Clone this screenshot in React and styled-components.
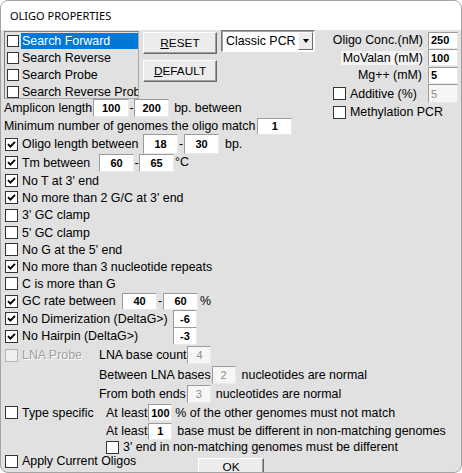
import styled, { createGlobalStyle } from "styled-components";

const GlobalStyle = createGlobalStyle`
  html, body {
    margin: 0;
    padding: 0;
    background: #ffffff;
  }
  body {
    font-family: "Liberation Sans", Arial, sans-serif;
    font-size: 12.4px;
    color: #000;
  }
`;

const Window = styled.div`
  width: 462px;
  height: 473px;
  box-sizing: border-box;
  border: 1px solid #a3a3a3;
  border-radius: 8px;
  overflow: hidden;
  display: flex;
  flex-direction: column;
  background: #e1e1e1;
`;

const TitleBar = styled.div`
  flex: none;
  height: 29px;
  background: #ffffff;
  display: flex;
  align-items: center;
  padding-left: 9px;
  font-family: "Noto Sans", "Liberation Sans", sans-serif;
  font-size: 11px;
  color: #000;
`;

const Body = styled.div`
  display: flex;
  flex-direction: column;
  padding: 0 3px;
`;

const TopSection = styled.div`
  display: flex;
  justify-content: space-between;
  height: 105px;
`;

const LeftCol = styled.div`
  display: flex;
  flex-direction: column;
`;

const TopRow = styled.div`
  display: flex;
  align-items: flex-start;
  height: 69px;
`;

const ListBox = styled.div`
  box-sizing: border-box;
  margin-top: 1px;
  width: 135px;
  height: 68px;
  border: 1px solid;
  border-color: #7f7f7f #a9a9a9 #a9a9a9 #7f7f7f;
  overflow: hidden;
`;

const ListItem = styled.div`
  display: flex;
  align-items: center;
  height: 17px;
  padding-left: 2px;
  white-space: nowrap;
`;

const ItemLabel = styled.span`
  flex: 1;
  display: flex;
  align-items: center;
  height: 16px;
  margin-left: 2px;
  padding-left: 1px;
  background: ${(p) => (p.$selected ? "#0078d7" : "transparent")};
  color: ${(p) => (p.$selected ? "#fff" : "#000")};
  overflow: hidden;
`;

const ButtonCol = styled.div`
  display: flex;
  flex-direction: column;
  gap: 6px;
  margin: 2px 0 0 4px;
`;

const Button = styled.div`
  box-sizing: border-box;
  width: ${(p) => p.$w}px;
  height: 22px;
  flex: none;
  display: flex;
  align-items: ${(p) => (p.$top ? "flex-start" : "center")};
  padding-top: ${(p) => (p.$top ? 1 : 0)}px;
  justify-content: center;
  background: #ececec;
  border: 1px solid;
  border-color: #ffffff #6a6a6a #6a6a6a #ffffff;
  box-shadow: inset -1px -1px 0 #a0a0a0;
  font-size: 11.8px;
  margin-top: ${(p) => p.$mt || 0}px;
`;

const Combo = styled.div`
  box-sizing: border-box;
  width: 94px;
  height: 22px;
  margin-left: 4px;
  display: flex;
  align-items: center;
  background: #fff;
  border: 1px solid;
  border-color: #7a7a7a #ffffff #ffffff #7a7a7a;
  box-shadow: inset 1px 1px 0 #a0a0a0;
`;

const ComboText = styled.span`
  flex: 1;
  padding-left: 4px;
  white-space: nowrap;
  overflow: hidden;
`;

const ComboArrow = styled.span`
  box-sizing: border-box;
  flex: none;
  width: 15px;
  height: 18px;
  margin-right: 1px;
  display: flex;
  align-items: center;
  justify-content: center;
  background: #ececec;
  border: 1px solid;
  border-color: #ffffff #6a6a6a #6a6a6a #ffffff;
  &::after {
    content: "";
    border-left: 3.5px solid transparent;
    border-right: 3.5px solid transparent;
    border-top: 4px solid #000;
  }
`;

const Row = styled.div`
  display: flex;
  align-items: ${(p) => p.$align || "center"};
  height: ${(p) => p.$h}px;
  padding-left: ${(p) => p.$pl || 0}px;
  white-space: nowrap;
  flex: none;
`;

const Text = styled.span`
  margin-left: ${(p) => p.$ml || 0}px;
  margin-top: ${(p) => p.$mt || 0}px;
  align-self: ${(p) => p.$self || "auto"};
  background: ${(p) => p.$bg || "transparent"};
  padding-left: ${(p) => (p.$bg ? 2 : 0)}px;
`;

const Dash = styled.span`
  width: ${(p) => p.$w}px;
  text-align: center;
`;

const Field = styled.div`
  box-sizing: border-box;
  flex: none;
  width: ${(p) => p.$w}px;
  height: ${(p) => p.$h || 18}px;
  margin-left: ${(p) => p.$ml || 0}px;
  display: flex;
  align-items: center;
  justify-content: ${(p) => (p.$left ? "flex-start" : "center")};
  padding-left: ${(p) => (p.$left ? 2 : 0)}px;
  background: ${(p) => (p.$disabled ? "#f6f6f6" : "#ffffff")};
  color: ${(p) => (p.$disabled ? "#8c8c8c" : "#000")};
  font-weight: ${(p) => (p.$disabled ? "normal" : "bold")};
  font-size: 11px;
  border: 1px solid;
  border-color: #9b9b9b #e9e9e9 #e9e9e9 #9b9b9b;
`;

const CheckItem = styled.div`
  display: flex;
  align-items: center;
  flex: none;
  gap: 4px;
  padding-left: 1px;
  width: ${(p) => (p.$w ? `${p.$w}px` : "auto")};
  box-sizing: border-box;
  color: ${(p) => (p.$disabled ? "#a0a0a0" : "#000")};
  text-shadow: ${(p) => (p.$disabled ? "1px 1px 0 #ffffff" : "none")};
`;

const Box = styled.span`
  box-sizing: border-box;
  flex: none;
  width: ${(p) => p.$size || 13}px;
  height: ${(p) => p.$size || 13}px;
  display: flex;
  align-items: center;
  justify-content: center;
  background: ${(p) => (p.$disabled ? "#efefef" : "#ffffff")};
  border: 1px solid ${(p) => (p.$disabled ? "#b4b4b4" : "#333333")};
`;

const RightCol = styled.div`
  display: flex;
  flex-direction: column;
  width: 126px;
  margin-top: 1px;
`;

const ParamRow = styled.div`
  display: flex;
  align-items: center;
  justify-content: ${(p) => p.$justify || "flex-end"};
  height: ${(p) => p.$h}px;
  white-space: nowrap;
`;

function Check({ checked, disabled, size }) {
  return (
    <Box $disabled={disabled} $size={size}>
      {checked && (
        <svg width="9" height="9" viewBox="0 0 9 9">
          <path d="M1 4.2 L3.4 6.6 L8 1.8" fill="none" stroke="#000" strokeWidth="1.9" />
        </svg>
      )}
    </Box>
  );
}

function CheckLine({ children, checked, disabled, w }) {
  return (
    <CheckItem $w={w} $disabled={disabled}>
      <Check checked={checked} disabled={disabled} />
      <span>{children}</span>
    </CheckItem>
  );
}

export default function App() {
  return (
    <>
      <GlobalStyle />
      <Window>
        <TitleBar>OLIGO PROPERTIES</TitleBar>
        <Body>
          <TopSection>
            <LeftCol>
              <TopRow>
                <ListBox>
                  <ListItem>
                    <Check size={12} />
                    <ItemLabel $selected>Search Forward</ItemLabel>
                  </ListItem>
                  <ListItem>
                    <Check size={12} />
                    <ItemLabel>Search Reverse</ItemLabel>
                  </ListItem>
                  <ListItem>
                    <Check size={12} />
                    <ItemLabel>Search Probe</ItemLabel>
                  </ListItem>
                  <ListItem>
                    <Check size={12} />
                    <ItemLabel>Search Reverse Prob</ItemLabel>
                  </ListItem>
                </ListBox>
                <ButtonCol>
                  <Button $w={74}>
                    <u>R</u>ESET
                  </Button>
                  <Button $w={74}>
                    <u>D</u>EFAULT
                  </Button>
                </ButtonCol>
                <Combo>
                  <ComboText>Classic PCR</ComboText>
                  <ComboArrow />
                </Combo>
              </TopRow>
              <Row $h={18}>
                <Text>Amplicon length</Text>
                <Field $w={36} $ml={1}>100</Field>
                <Dash $w={5}>-</Dash>
                <Field $w={35}>200</Field>
                <Text $ml={5}>bp. between</Text>
              </Row>
              <Row $h={18}>
                <Text>Minimum number of genomes the oligo match</Text>
                <Field $w={35} $h={17} $ml={2}>1</Field>
              </Row>
            </LeftCol>
            <RightCol>
              <ParamRow $h={18}>
                <Text>Oligo Conc.(nM)</Text>
                <Field $w={30} $h={17} $ml={5} $left>250</Field>
              </ParamRow>
              <ParamRow $h={17}>
                <Text $bg="#f3f3f3">MoValan (mM)</Text>
                <Field $w={30} $h={17} $ml={5} $left>100</Field>
              </ParamRow>
              <ParamRow $h={18}>
                <Text>Mg++ (mM)</Text>
                <Field $w={30} $h={17} $ml={6} $left>5</Field>
              </ParamRow>
              <ParamRow $h={19} $justify="space-between">
                <CheckLine>Additive (%)</CheckLine>
                <Field $w={30} $h={19} $left $disabled>5</Field>
              </ParamRow>
              <ParamRow $h={18} $justify="flex-start">
                <CheckLine>Methylation PCR</CheckLine>
              </ParamRow>
            </RightCol>
          </TopSection>

          <Row $h={18}>
            <CheckLine checked w={139}>Oligo length between</CheckLine>
            <Field $w={35} $h={20}>18</Field>
            <Dash $w={6}>-</Dash>
            <Field $w={35} $h={20}>30</Field>
            <Text $ml={6}>bp.</Text>
          </Row>
          <Row $h={19}>
            <CheckLine checked w={95}>Tm between</CheckLine>
            <Field $w={35}>60</Field>
            <Dash $w={5}>-</Dash>
            <Field $w={35}>65</Field>
            <Text $ml={1} $self="flex-start" $mt={2}>°C</Text>
          </Row>
          <Row $h={17}>
            <CheckLine checked>No T at 3' end</CheckLine>
          </Row>
          <Row $h={17}>
            <CheckLine checked>No more than 2 G/C at 3' end</CheckLine>
          </Row>
          <Row $h={18}>
            <CheckLine>3' GC clamp</CheckLine>
          </Row>
          <Row $h={17}>
            <CheckLine>5' GC clamp</CheckLine>
          </Row>
          <Row $h={17}>
            <CheckLine>No G at the 5' end</CheckLine>
          </Row>
          <Row $h={17}>
            <CheckLine checked>No more than 3 nucleotide repeats</CheckLine>
          </Row>
          <Row $h={17}>
            <CheckLine>C is more than G</CheckLine>
          </Row>
          <Row $h={18}>
            <CheckLine checked w={118}>GC rate between</CheckLine>
            <Field $w={35} $h={17}>40</Field>
            <Dash $w={6}>-</Dash>
            <Field $w={35} $h={17}>60</Field>
            <Text $ml={2}>%</Text>
          </Row>
          <Row $h={17}>
            <CheckLine checked w={169}>No Dimerization (DeltaG&gt;)</CheckLine>
            <Field $w={24}>-6</Field>
          </Row>
          <Row $h={18}>
            <CheckLine checked w={169}>No Hairpin (DeltaG&gt;)</CheckLine>
            <Field $w={24}>-3</Field>
          </Row>
          <Row $h={20}>
            <CheckLine disabled w={95}>LNA Probe</CheckLine>
            <Text>LNA base count</Text>
            <Field $w={24} $ml={1} $disabled>4</Field>
          </Row>
          <Row $h={20} $pl={95}>
            <Text>Between LNA bases</Text>
            <Field $w={24} $ml={1} $disabled>2</Field>
            <Text $ml={6}>nucleotides are normal</Text>
          </Row>
          <Row $h={18} $pl={95}>
            <Text>From both ends</Text>
            <Field $w={24} $ml={1} $disabled>3</Field>
            <Text $ml={5}>nucleotides are normal</Text>
          </Row>
          <Row $h={19}>
            <CheckLine w={102}>Type specific</CheckLine>
            <Text>At least</Text>
            <Field $w={24} $h={17} $ml={1}>100</Field>
            <Text $ml={3}>% of the other genomes must not match</Text>
          </Row>
          <Row $h={18} $pl={102}>
            <Text>At least</Text>
            <Field $w={24} $h={17} $ml={1}>1</Field>
            <Text $ml={5}>base must be different in non-matching genomes</Text>
          </Row>
          <Row $h={14} $pl={101}>
            <CheckLine>3' end in non-matching genomes must be different</CheckLine>
          </Row>
          <Row $h={20} $align="flex-start">
            <CheckLine w={194}>Apply Current Oligos</CheckLine>
            <Button $w={66} $mt={4} $top>
              <u>O</u>K
            </Button>
          </Row>
        </Body>
      </Window>
    </>
  );
}
